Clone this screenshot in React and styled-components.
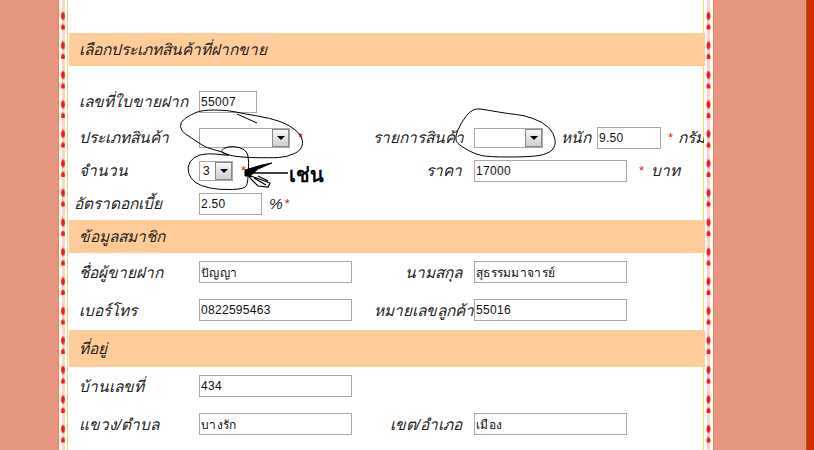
import React from 'react';
import styled, { createGlobalStyle } from 'styled-components';

const GlobalStyle = createGlobalStyle`
	html, body {
		margin: 0;
		padding: 0;
		height: 450px;
		overflow: hidden;
		background: #e4967e;
	}
`;

const Page = styled.div`
	display: flex;
	width: 814px;
	height: 450px;
	overflow: hidden;
	position: relative;
	font-family: "Liberation Sans", "Noto Sans", sans-serif;
`;

const Side = styled.div`
	width: ${p => p.$width}px;
	flex: none;
	background: #e4967e;
`;

const Edge = styled.div`
	width: 8px;
	flex: none;
	box-sizing: border-box;
	background: #cc3300;
	border-left: 1px solid #b8492a;
`;

// the dotted red ribbon on either side of the sheet
const Ribbon = styled.div`
	width: ${p => p.$width}px;
	flex: none;
	box-sizing: border-box;
	background-color: #fff;
	border-${p => p.$side}: 1px solid #f47c50;
	background-image:
		radial-gradient(ellipse 2.5px 5px at 50% 16px, #f01c1c 55%, transparent 100%),
		radial-gradient(ellipse 2.5px 4px at 50% 27.5px, #f01c1c 55%, transparent 100%),
		linear-gradient(90deg, transparent 3px, #fcd4cc 3px, #fcd4cc 6px, transparent 6px);
	background-size: 100% 29.5px, 100% 29.5px, 100% 100%;
`;

const Sheet = styled.div`
	width: 637px;
	flex: none;
	box-sizing: border-box;
	background: #fff;
	border-left: 1px solid #ffd65c;
	border-right: 1px solid #ffd65c;
	padding-top: 33px;
`;

const Band = styled.div`
	position: relative;
	display: flex;
	align-items: center;
	height: ${p => p.$height}px;
	margin: 0 -2px ${p => p.$after || 0}px 1px;
	padding-left: 10px;
	background: #ffcc99;
	font-size: 15.4px;
	font-style: italic;
	color: #222;
`;

const Row = styled.div`
	display: flex;
	align-items: center;
	height: ${p => p.$height}px;
	margin-bottom: ${p => p.$after || 0}px;
	padding-left: 11px;
	white-space: nowrap;
`;

const Label = styled.div`
	width: ${p => p.$width || 120}px;
	flex: none;
	box-sizing: border-box;
	margin-left: ${p => p.$shift || 0}px;
	text-align: ${p => p.$align || 'left'};
	padding-right: ${p => p.$pad || 0}px;
	font-size: 15.4px;
	font-style: italic;
	color: #222;
`;

const Field = styled.input`
	width: ${p => p.$width}px;
	height: 22px;
	flex: none;
	box-sizing: border-box;
	margin: 0 0 0 ${p => p.$gap || 0}px;
	padding: 1px;
	border: 1px solid #a9a9a9;
	outline: none;
	background: #fff;
	font-family: "Liberation Sans", sans-serif;
	font-size: 12px;
	letter-spacing: 0.3px;
	color: #111;
`;

const Select = styled.div`
	display: flex;
	align-items: center;
	justify-content: space-between;
	width: ${p => p.$width}px;
	height: 20px;
	flex: none;
	box-sizing: border-box;
	padding-left: 3px;
	border: 1px solid #a9a9a9;
	background: #fff;
	font-size: 12px;
	color: #111;
`;

const Drop = styled.div`
	display: flex;
	align-items: center;
	justify-content: center;
	width: 17px;
	height: 18px;
	box-sizing: border-box;
	border: 1px solid #8a8a8a;
	background: linear-gradient(#f6f6f6, #cfcfcf);
	&::after {
		content: "";
		border-top: 4px solid #000;
		border-left: 4px solid transparent;
		border-right: 4px solid transparent;
	}
`;

const Star = styled.span`
	flex: none;
	width: 5px;
	color: #e02020;
	font-size: 13px;
	margin-left: ${p => p.$gap || 0}px;
`;

const Unit = styled.span`
	flex: none;
	width: ${p => (p.$width ? `${p.$width}px` : 'auto')};
	font-size: 15.4px;
	font-style: italic;
	color: #222;
	margin-left: ${p => p.$gap || 0}px;
`;

const Note = styled.div`
	position: absolute;
	left: 289px;
	top: 159px;
	font-size: 20px;
	font-weight: bold;
	color: #000;
`;

const Scrawl = styled.svg`
	position: absolute;
	left: 0;
	top: 0;
	pointer-events: none;
`;

// rounds a list of hand-drawn points off into one pen stroke
const pen = (points, closed) => {
	const mid = (a, b) => `${(a[0] + b[0]) / 2} ${(a[1] + b[1]) / 2}`;
	const list = closed ? [...points, points[0], points[1]] : points;
	let d = `M${closed ? mid(list[0], list[1]) : list[0].join(' ')}`;
	for (let i = 1; i < list.length - 1; i++) d += ` Q${list[i].join(' ')} ${mid(list[i], list[i + 1])}`;
	if (!closed) d += ` L${list[list.length - 1].join(' ')}`;
	return d;
};

const ring1 = [[202,110],[190,115],[180,122],[181,131],[190,137],[199,143],[207,148],[220,151],[233,157],[270,158],[287,157],[302,150],[303,137],[290,125],[270,118],[245,114],[227,110]];
const ring2 = [[221,153],[223,148],[233,146],[245,149],[249,157],[248,182],[245,189],[220,190],[200,186],[190,178],[187,167],[193,157],[207,153],[233,156]];
const ring3 = [[454,140],[461,122],[473,108],[487,110],[510,114],[523,115],[543,122],[554,133],[556,146],[548,154],[530,157],[488,157],[475,154],[462,147]];

function App() {
	return (
		<Page>
			<GlobalStyle />
			<Side $width={58} />
			<Ribbon $side="left" $width={9} />
			<Sheet>
				<Band $height={33} $after={19}>เลือกประเภทสินค้าที่ฝากขาย</Band>
				<Row $height={33} $after={3}>
					<Label>เลขที่ใบขายฝาก</Label>
					<Field $width={58} defaultValue="55007" />
				</Row>
				<Row $height={33}>
					<Label>ประเภทสินค้า</Label>
					<Select $width={91}><span /><Drop /></Select>
					<Star $gap={8}>*</Star>
					<Label $width={101} $shift={70}>รายการสินค้า</Label>
					<Select $width={69}><span /><Drop /></Select>
					<Unit $gap={18} $width={29}>หนัก</Unit>
					<Field $width={64} $gap={7} defaultValue="9.50" />
					<Star $gap={7}>*</Star>
					<Unit $gap={5}>กรัม</Unit>
				</Row>
				<Row $height={33}>
					<Label>จำนวน</Label>
					<Select $width={34}><span>3</span><Drop /></Select>
					<Star $gap={8}>*</Star>
					<Label $width={228} $align="right" $pad={12}>ราคา</Label>
					<Field $width={153} defaultValue="17000" />
					<Star $gap={12}>*</Star>
					<Unit $gap={7}>บาท</Unit>
				</Row>
				<Row $height={33}>
					<Label $width={125} $shift={-5}>อัตราดอกเบี้ย</Label>
					<Field $width={63} defaultValue="2.50" />
					<Unit $gap={7}>%</Unit>
					<Star $gap={2}>*</Star>
				</Row>
				<Band $height={33}>ข้อมูลสมาชิก</Band>
				<Row $height={38}>
					<Label>ชื่อผู้ขายฝาก</Label>
					<Field $width={153} defaultValue="ปัญญา" />
					<Label $width={122} $align="right" $pad={12}>นามสกุล</Label>
					<Field $width={153} defaultValue="สุธรรมมาจารย์" />
				</Row>
				<Row $height={38} $after={1}>
					<Label>เบอร์โทร</Label>
					<Field $width={153} defaultValue="0822595463" />
					<Label $width={122} $align="right">หมายเลขลูกค้า</Label>
					<Field $width={153} defaultValue="55016" />
				</Row>
				<Band $height={37}>ที่อยู่</Band>
				<Row $height={38}>
					<Label>บ้านเลขที่</Label>
					<Field $width={153} defaultValue="434" />
				</Row>
				<Row $height={38}>
					<Label>แขวง/ตำบล</Label>
					<Field $width={153} defaultValue="บางรัก" />
					<Label $width={122} $align="right" $pad={12}>เขต/อำเภอ</Label>
					<Field $width={153} defaultValue="เมือง" />
				</Row>
			</Sheet>
			<Ribbon $side="right" $width={10} />
			<Side $width={92} />
			<Edge />
			<Scrawl width="814" height="450" viewBox="0 0 814 450" fill="none" stroke="#000" strokeWidth="1">
				<path d={pen(ring1, true)} />
				<path d="M237 114 L257 123" />
				<path d={pen(ring2, true)} />
				<path d={pen(ring3, true)} />
				<path d="M252 173 L288 173" strokeWidth="1.5" />
				<path d="M245 170 L262 165 L272 163 L258 169 L250 176 L245 176 Z" fill="#000" />
				<path d="M248 175 L262 180 L270 183 L268 187 L258 186 L252 180 Z M254 178 L266 185 M258 176 L268 181" strokeWidth="1.2" />
			</Scrawl>
			<Note>เช่น</Note>
		</Page>
	);
}

export default App;
